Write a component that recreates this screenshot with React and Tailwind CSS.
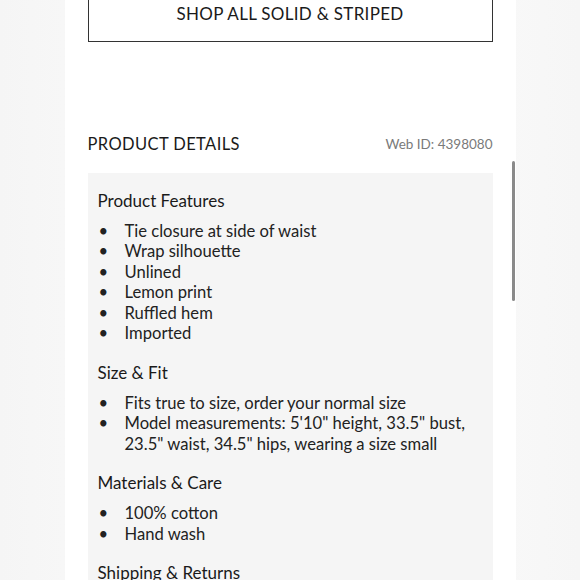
import React from 'react';

const sections = [
  {
    title: 'Product Features',
    items: [
      'Tie closure at side of waist',
      'Wrap silhouette',
      'Unlined',
      'Lemon print',
      'Ruffled hem',
      'Imported',
    ],
  },
  {
    title: 'Size & Fit',
    items: [
      'Fits true to size, order your normal size',
      'Model measurements: 5\'10" height, 33.5" bust, 23.5" waist, 34.5" hips, wearing a size small',
    ],
  },
  {
    title: 'Materials & Care',
    items: ['100% cotton', 'Hand wash'],
  },
  {
    title: 'Shipping & Returns',
    items: ['Free shipping on orders over $150'],
  },
];

const App = () => {
  return (
    <div
      className="flex justify-center h-[580px] overflow-hidden bg-gradient-to-r from-[#f5f5f5] via-[#fefefe] to-[#f6f6f6] text-[#1a1a1a]"
      style={{ fontFamily: 'Lato, "Noto Sans", sans-serif' }}
    >
      <div className="relative w-[451px] bg-white px-[23px]">
        {/* Shop button */}
        <div className="-mt-[15px] h-[57px] border-[1.5px] border-[#333] flex items-center justify-center">
          <span className="text-[17px] tracking-[0.3px] uppercase">Shop all solid &amp; striped</span>
        </div>

        {/* Header */}
        <div className="mt-[90px] flex items-center justify-between">
          <h2 className="text-[16.5px] tracking-[0.4px] uppercase">Product details</h2>
          <span className="text-[13.5px] text-[#7a7a7a]">Web ID: 4398080</span>
        </div>

        {/* Details box */}
        <div className="mt-[16px] bg-[#f5f5f5] pl-[10px] pr-[8px] pt-[17px] pb-6">
          {sections.map((s) => (
            <div key={s.title} className="mb-[18px]">
              <h3 className="text-[17px] leading-[21px]">{s.title}</h3>
              <ul className="mt-[10px]">
                {s.items.map((item) => (
                  <li key={item} className="flex text-[16.6px] leading-[20.5px] text-[#222]">
                    <span className="w-[27px] shrink-0 pl-[1px]">•</span>
                    <span>{item}</span>
                  </li>
                ))}
              </ul>
            </div>
          ))}
        </div>

        {/* Scrollbar */}
        <div className="absolute left-[447px] top-[161px] w-[3px] h-[140px] rounded-full bg-[#8a8a8a]" />
      </div>
    </div>
  );
};

export default App;
